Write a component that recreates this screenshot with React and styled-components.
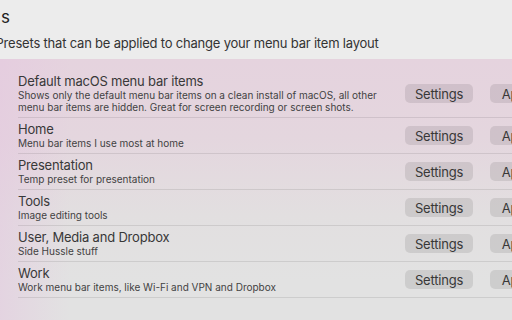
import React from 'react'
import styled, { createGlobalStyle } from 'styled-components'

const presets = [
  {
    name: 'Default macOS menu bar items',
    desc: 'Shows only the default menu bar items on a clean install of macOS, all other menu bar items are hidden. Great for screen recording or screen shots.',
  },
  { name: 'Home', desc: 'Menu bar items I use most at home' },
  { name: 'Presentation', desc: 'Temp preset for presentation' },
  { name: 'Tools', desc: 'Image editing tools' },
  { name: 'User, Media and Dropbox', desc: 'Side Hussle stuff' },
  { name: 'Work', desc: 'Work menu bar items, like Wi-Fi and VPN and Dropbox' },
]

const GlobalStyle = createGlobalStyle`
  html, body {
    margin: 0;
    padding: 0;
    width: 512px;
    height: 320px;
    overflow: hidden;
    background: #ececec;
  }
  body {
    font-family: Inter, "Noto Sans", sans-serif;
    -webkit-font-smoothing: antialiased;
  }
`

const Page = styled.div`
  width: 512px;
  height: 320px;
  display: flex;
  flex-direction: column;
  overflow: hidden;
`

const Header = styled.div`
  padding: 6px 0 8px;
  margin-left: -4.5px;
`

const Title = styled.div`
  font-size: 17px;
  line-height: 22px;
  color: #222;
  padding-left: 5.5px;
`

const Subtitle = styled.div`
  margin-top: 7px;
  font-size: 13px;
  line-height: 16px;
  letter-spacing: -0.2px;
  color: #333;
  white-space: nowrap;
`

const Panel = styled.div`
  flex: 1;
  padding: 11px 0 0 18px;
  background:
    linear-gradient(to right, rgba(229, 200, 224, 0.55) 0px, rgba(229, 200, 224, 0) 70px),
    linear-gradient(to bottom, #e5d3de 0%, #e4d6de 30%, #e2dfe0 60%, #e2e2e2 85%);
`

const Row = styled.div`
  display: flex;
  align-items: center;
  width: 620px;
  padding: 4px 0;
  border-bottom: 1px solid rgba(0, 0, 0, 0.09);
`

const Info = styled.div`
  flex: 0 0 375px;
  margin-right: 12px;
`

const Name = styled.div`
  font-size: 13px;
  line-height: 15px;
  letter-spacing: -0.2px;
  color: #383838;
`

const Desc = styled.div`
  font-size: 10px;
  line-height: 12px;
  color: #424242;
  max-width: 365px;
`

const Buttons = styled.div`
  display: flex;
  gap: 17px;
`

const Button = styled.button`
  width: ${p => p.$w}px;
  height: 19.5px;
  border: none;
  border-radius: 5px;
  background: rgba(0, 0, 0, 0.09);
  color: #383838;
  font-family: Inter, "Noto Sans", sans-serif;
  font-size: 13px;
  letter-spacing: -0.2px;
  padding: 0;
`

export default function App() {
  return (
    <Page>
      <GlobalStyle />
      <Header>
        <Title>s</Title>
        <Subtitle>Presets that can be applied to change your menu bar item layout</Subtitle>
      </Header>
      <Panel>
        {presets.map(p => (
          <Row key={p.name}>
            <Info>
              <Name>{p.name}</Name>
              <Desc>{p.desc}</Desc>
            </Info>
            <Buttons>
              <Button $w={68}>Settings</Button>
              <Button $w={58}>Apply</Button>
            </Buttons>
          </Row>
        ))}
      </Panel>
    </Page>
  )
}
